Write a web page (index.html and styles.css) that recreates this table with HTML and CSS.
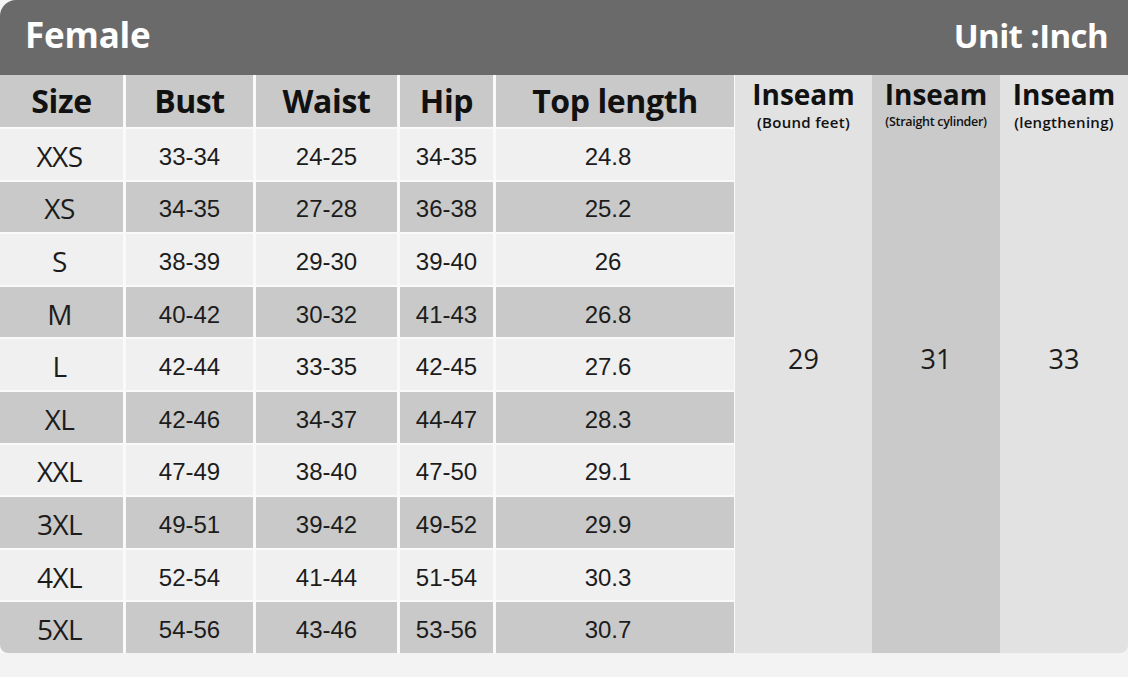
FILE: index.html
```html
<!DOCTYPE html>
<html>
<head>
<meta charset="utf-8">
<link rel="stylesheet" href="styles.css">
</head>
<body>
<div class="chart">
  <div class="bar">
    <span class="bar-title">Female</span>
    <span class="bar-unit">Unit :Inch</span>
  </div>
  <div class="body">
    <div class="grid">
      <div class="hd">Size</div><div class="hd">Bust</div><div class="hd">Waist</div><div class="hd">Hip</div><div class="hd">Top length</div>

      <div class="c sz lt">XXS</div><div class="c lt">33-34</div><div class="c lt">24-25</div><div class="c lt">34-35</div><div class="c lt tl">24.8</div>
      <div class="c sz dk">XS</div><div class="c dk">34-35</div><div class="c dk">27-28</div><div class="c dk">36-38</div><div class="c dk tl">25.2</div>
      <div class="c sz lt">S</div><div class="c lt">38-39</div><div class="c lt">29-30</div><div class="c lt">39-40</div><div class="c lt tl">26</div>
      <div class="c sz dk">M</div><div class="c dk">40-42</div><div class="c dk">30-32</div><div class="c dk">41-43</div><div class="c dk tl">26.8</div>
      <div class="c sz lt">L</div><div class="c lt">42-44</div><div class="c lt">33-35</div><div class="c lt">42-45</div><div class="c lt tl">27.6</div>
      <div class="c sz dk">XL</div><div class="c dk">42-46</div><div class="c dk">34-37</div><div class="c dk">44-47</div><div class="c dk tl">28.3</div>
      <div class="c sz lt">XXL</div><div class="c lt">47-49</div><div class="c lt">38-40</div><div class="c lt">47-50</div><div class="c lt tl">29.1</div>
      <div class="c sz dk">3XL</div><div class="c dk">49-51</div><div class="c dk">39-42</div><div class="c dk">49-52</div><div class="c dk tl">29.9</div>
      <div class="c sz lt">4XL</div><div class="c lt">52-54</div><div class="c lt">41-44</div><div class="c lt">51-54</div><div class="c lt tl">30.3</div>
      <div class="c sz dk first-col-last">5XL</div><div class="c dk">54-56</div><div class="c dk">43-46</div><div class="c dk">53-56</div><div class="c dk tl">30.7</div>
    </div>
    <div class="ins ins-a">
      <div class="ins-title">Inseam</div>
      <div class="ins-sub">(Bound feet)</div>
      <div class="ins-val">29</div>
    </div>
    <div class="ins ins-b">
      <div class="ins-title">Inseam</div>
      <div class="ins-sub ins-sub-sm">(Straight cylinder)</div>
      <div class="ins-val">31</div>
    </div>
    <div class="ins ins-c">
      <div class="ins-title">Inseam</div>
      <div class="ins-sub">(lengthening)</div>
      <div class="ins-val">33</div>
    </div>
  </div>
</div>
</body>
</html>
```

FILE: styles.css
```css
html, body {
  margin: 0;
  padding: 0;
  background: #f3f3f3;
}
body {
  width: 1128px;
  height: 677px;
  overflow: hidden;
}
.chart {
  width: 1128px;
  display: flex;
  flex-direction: column;
}
.bar {
  height: 75px;
  background: #6b6a6b;
  border-top-left-radius: 16px;
  display: flex;
  align-items: center;
  justify-content: space-between;
  padding: 0 20px 0 25px;
  box-sizing: border-box;
  color: #fff;
  font-family: "Open Sans", sans-serif;
  font-weight: 700;
}
.bar-title {
  font-size: 35px;
  letter-spacing: -0.2px;
  margin-top: -6px;
}
.bar-unit {
  font-size: 33px;
  letter-spacing: -0.6px;
  margin-top: -5px;
}
.body {
  display: flex;
  height: 578px;
}
.grid {
  display: grid;
  grid-template-columns: 123px 127px 141px 93px 238px;
  grid-template-rows: 52px repeat(10, 50.6px);
  column-gap: 3px;
  row-gap: 2px;
  background: #fafafa;
  width: 735px;
  flex: none;
}
.hd {
  background: #c9c9c9;
  display: flex;
  align-items: center;
  justify-content: center;
  font-family: "Open Sans", sans-serif;
  font-weight: 700;
  font-size: 32px;
  letter-spacing: -0.4px;
  color: #111;
  padding-bottom: 2px;
}
.c {
  display: flex;
  align-items: center;
  justify-content: center;
  font-family: "Liberation Sans", Arial, sans-serif;
  font-size: 24px;
  color: #1c1c1c;
  padding-top: 5px;
}
.c.tl {
  padding-right: 14px;
}
.c.sz {
  font-family: "Open Sans", sans-serif;
  font-size: 28px;
  letter-spacing: -0.6px;
  padding-right: 4px;
  padding-top: 3px;
}
.lt { background: #f0f0f0; }
.dk { background: #c9c9c9; }
.first-col-last { border-bottom-left-radius: 8px; }
.ins {
  display: flex;
  flex-direction: column;
  align-items: center;
  font-family: "Open Sans", sans-serif;
  color: #111;
  box-sizing: border-box;
  padding-top: 5px;
}
.ins-a { width: 137px; background: #e2e2e2; }
.ins-b { width: 128px; background: #cacaca; }
.ins-c { width: 128px; background: #e2e2e2; border-bottom-right-radius: 8px; }
.ins-title {
  font-weight: 700;
  font-size: 28px;
  line-height: 28px;
  letter-spacing: 0;
}
.ins-sub {
  font-weight: 600;
  font-size: 15px;
  line-height: 17px;
  margin-top: 6px;
  letter-spacing: 0.3px;
}
.ins-sub-sm {
  font-size: 12.5px;
  line-height: 20px;
  margin-top: 4px;
  letter-spacing: -0.3px;
}
.ins-val {
  flex: 1;
  display: flex;
  align-items: center;
  padding-bottom: 68px;
  font-size: 27px;
  color: #1c1c1c;
}
```
